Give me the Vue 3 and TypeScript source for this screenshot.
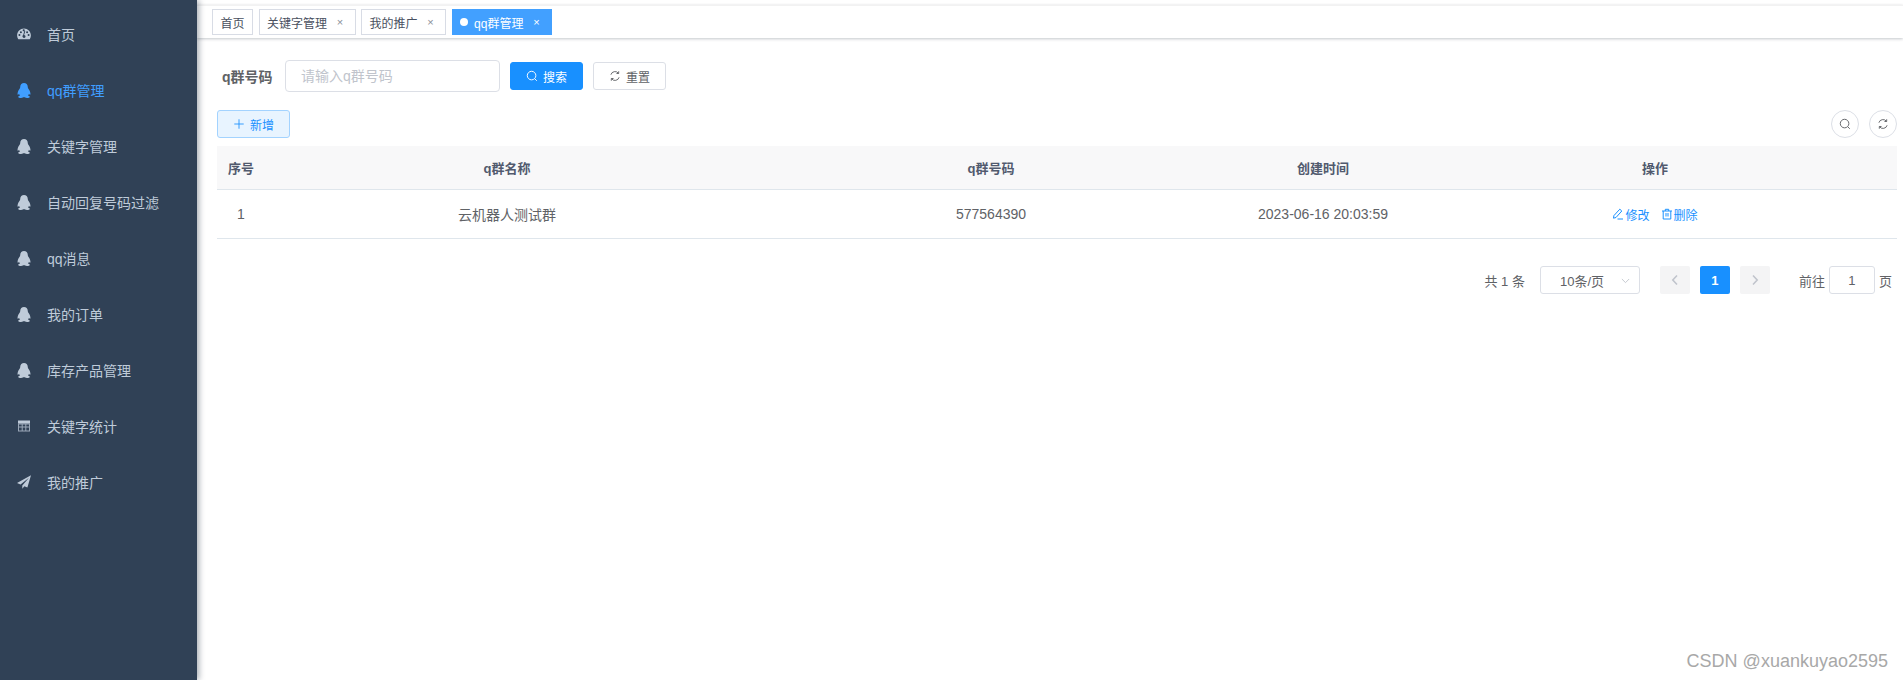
<template>
  <div class="app-wrapper">
    <aside class="sidebar">
      <a
        v-for="item in menu"
        :key="item.label"
        class="menu-item"
        :class="{ active: item.active }"
      >
        <svg v-if="item.icon === 'qq'" class="menu-icon qq" viewBox="0 0 14 15" fill="currentColor">
          <path d="M7 0C4.800 0 3.300 1.700 3.200 3.900c0 .8-.2 1.300-.6 1.900C1.700 7.100.8 8.500.6 10.200c-.1.900 0 1.500.3 1.500.4 0 .8-.4 1.100-.9.200.7.600 1.300 1.100 1.800-.9.200-1.800.6-1.800 1.300 0 .8 1.300 1.100 2.600 1.100 1.100 0 1.800-.3 2.300-.7h1.600c.5.400 1.200.7 2.300.7 1.300 0 2.600-.3 2.600-1.100 0-.7-.9-1.100-1.800-1.300.5-.5.900-1.100 1.100-1.800.3.500.7.900 1.100.9.300 0 .4-.6.300-1.500-.2-1.700-1.100-3.100-2-4.400-.4-.6-.6-1.100-.6-1.900C10.700 1.700 9.200 0 7 0z" />
        </svg>
        <svg v-else class="menu-icon" viewBox="0 0 14 14" fill="currentColor">
          <path
            v-if="item.icon === 'dashboard'"
            fill-rule="evenodd"
            d="M7 1.600C3.200 1.600.1 4.600.1 8.400c0 1.300.4 2.500 1 3.500.2.200.4.300.6.300h10.600c.2 0 .5-.1.6-.3.6-1 1-2.200 1-3.500 0-3.800-3.100-6.800-6.900-6.800zM2.400 9.100a1 1 0 1 1 0-2 1 1 0 0 1 0 2zm1.500-2.900a1 1 0 1 1 0-2 1 1 0 0 1 0 2zM7 10.900a1.500 1.500 0 0 1-.8-2.800l1.100-3.900c.1-.3.400-.4.600-.3.300.1.400.3.300.6L7.100 7.900A1.500 1.500 0 0 1 7 10.900zm0-6.700a1 1 0 1 1 0-1.900 1 1 0 0 1 0 1.900zm3.100 2a1 1 0 1 1 0-2 1 1 0 0 1 0 2zm1.500 2.900a1 1 0 1 1 0-2 1 1 0 0 1 0 2z"
          />
          <g v-else-if="item.icon === 'table'">
            <path d="M1 1.500h12v3H1z" />
            <path opacity="0.75" fill-rule="evenodd" d="M1 4.500h12v8H1zm1 1v2h2.700v-2zm3.700 0v2h2.600v-2zm3.600 0v2H12v-2zM2 8.500v3h2.700v-3zm3.700 0v3h2.600v-3zm3.600 0v3H12v-3z" />
          </g>
          <path v-else d="M14 .2 0 8.100l3.500 1.400L12 2.700 5.300 10.400v3.400l2.100-2.600 3 1.200z" />
        </svg>
        <span>{{ item.label }}</span>
      </a>
    </aside>

    <div class="main">
      <div class="tags-bar">
        <span
          v-for="tag in tags"
          :key="tag.label"
          class="tag"
          :class="{ current: tag.current }"
        >
          <i v-if="tag.current" class="tag-dot"></i>
          <span>{{ tag.label }}</span>
          <span v-if="tag.closable" class="tag-close">×</span>
        </span>
      </div>

      <div class="page">
        <form class="search-form" @submit.prevent>
          <label class="form-label">q群号码</label>
          <input class="text-input" type="text" placeholder="请输入q群号码" />
          <button type="button" class="btn btn-primary">
            <svg class="btn-icon" viewBox="0 0 14 14" fill="none" stroke="currentColor" stroke-width="1.100">
              <circle cx="6.500" cy="6.500" r="5" />
              <path d="m10.200 10.200 2.400 2.400" />
            </svg>
            搜索
          </button>
          <button type="button" class="btn btn-default">
            <svg class="btn-icon" viewBox="0 0 14 14" fill="none" stroke="currentColor" stroke-width="1.100">
              <path d="M2.200 5.500A5 5 0 0 1 11 3.800M11.800 8.500A5 5 0 0 1 3 10.200" />
              <path d="M11.300 1.500v2.600H8.700M2.700 12.500V9.900h2.600" />
            </svg>
            重置
          </button>
        </form>

        <div class="toolbar">
          <button type="button" class="btn btn-plain">
            <svg class="btn-icon" viewBox="0 0 14 14" fill="none" stroke="currentColor" stroke-width="1">
              <path d="M7 1.500v11M1.500 7h11" />
            </svg>
            新增
          </button>
          <div class="toolbar-right">
            <button type="button" class="circle-btn">
              <svg class="btn-icon" viewBox="0 0 14 14" fill="none" stroke="currentColor" stroke-width="1.100">
                <circle cx="6.500" cy="6.500" r="5" />
                <path d="m10.200 10.200 2.400 2.400" />
              </svg>
            </button>
            <button type="button" class="circle-btn">
              <svg class="btn-icon" viewBox="0 0 14 14" fill="none" stroke="currentColor" stroke-width="1.100">
                <path d="M2.200 5.500A5 5 0 0 1 11 3.800M11.800 8.500A5 5 0 0 1 3 10.200" />
                <path d="M11.300 1.500v2.600H8.700M2.700 12.500V9.900h2.600" />
              </svg>
            </button>
          </div>
        </div>

        <div class="table">
          <div class="row head">
            <div v-for="col in columns" :key="col" class="cell">{{ col }}</div>
          </div>
          <div v-for="row in rows" :key="row.id" class="row body">
            <div class="cell">{{ row.id }}</div>
            <div class="cell">{{ row.name }}</div>
            <div class="cell">{{ row.code }}</div>
            <div class="cell">{{ row.created }}</div>
            <div class="cell actions">
              <a class="link">
                <svg class="link-icon" viewBox="0 0 12 12" fill="none" stroke="currentColor" stroke-width="1">
                  <path d="M7.800 1.200 9.800 3 4 9.500l-2.500.7.400-2.600zM5.500 11h5.500" />
                </svg>修改
              </a>
              <a class="link">
                <svg class="link-icon" viewBox="0 0 12 12" fill="none" stroke="currentColor" stroke-width="1">
                  <path d="M1 3h10M4.300 3V1.300h3.400V3M2.200 3v8h7.600V3M5 5v3.500M7 5v3.500" />
                </svg>删除
              </a>
            </div>
          </div>
        </div>

        <div class="pagination">
          <span class="total">共 1 条</span>
          <div class="page-size">
            10条/页
            <svg class="caret" viewBox="0 0 10 6" fill="none" stroke="currentColor" stroke-width="1">
              <path d="m1 .8 4 4 4-4" />
            </svg>
          </div>
          <div class="pager">
            <button type="button" class="page-btn">
              <svg viewBox="0 0 8 12" fill="none" stroke="currentColor" stroke-width="1.600">
                <path d="M6 1.500 1.800 6 6 10.500" />
              </svg>
            </button>
            <button type="button" class="page-btn on">1</button>
            <button type="button" class="page-btn">
              <svg viewBox="0 0 8 12" fill="none" stroke="currentColor" stroke-width="1.600">
                <path d="M2 1.500 6.200 6 2 10.500" />
              </svg>
            </button>
          </div>
          <div class="jumper">
            前往
            <input class="jump-input" type="text" value="1" />
            页
          </div>
        </div>
      </div>
    </div>

    <div class="watermark">CSDN @xuankuyao2595</div>
  </div>
</template>

<script setup lang="ts">
interface MenuItem {
  label: string
  icon: 'dashboard' | 'qq' | 'table' | 'plane'
  active?: boolean
}

const menu: MenuItem[] = [
  { label: '首页', icon: 'dashboard' },
  { label: 'qq群管理', icon: 'qq', active: true },
  { label: '关键字管理', icon: 'qq' },
  { label: '自动回复号码过滤', icon: 'qq' },
  { label: 'qq消息', icon: 'qq' },
  { label: '我的订单', icon: 'qq' },
  { label: '库存产品管理', icon: 'qq' },
  { label: '关键字统计', icon: 'table' },
  { label: '我的推广', icon: 'plane' },
]

const tags = [
  { label: '首页', closable: false, current: false },
  { label: '关键字管理', closable: true, current: false },
  { label: '我的推广', closable: true, current: false },
  { label: 'qq群管理', closable: true, current: true },
]

const columns = ['序号', 'q群名称', 'q群号码', '创建时间', '操作']

const rows = [
  { id: 1, name: '云机器人测试群', code: '577564390', created: '2023-06-16 20:03:59' },
]
</script>

<style>
html,
body {
  margin: 0;
  height: 100%;
  overflow: hidden;
  background: #fff;
}
</style>

<style scoped>
.app-wrapper {
  display: flex;
  height: 680px;
  position: relative;
  font-family: "Liberation Sans", "Noto Sans CJK SC", sans-serif;
  color: #606266;
}

.sidebar {
  width: 197px;
  flex: none;
  background: #304156;
  box-shadow: 2px 0 6px rgba(0, 21, 41, 0.35);
  padding-top: 6px;
  box-sizing: border-box;
  z-index: 2;
}

.menu-item {
  display: flex;
  align-items: center;
  height: 56px;
  padding-left: 17px;
  font-size: 14px;
  color: #bfcbd9;
}

.menu-item.active {
  color: #409eff;
}

.menu-icon {
  width: 14px;
  height: 14px;
  margin-right: 16px;
  flex: none;
}

.menu-icon.qq {
  height: 15px;
}

.main {
  flex: 1;
  min-width: 0;
}

.tags-bar {
  height: 33px;
  margin-top: 5px;
  padding: 3px 0 0 15px;
  box-sizing: border-box;
  display: flex;
  gap: 5.5px;
  background: #fff;
  border-top: 1px solid #f2f2f2;
  box-shadow: 0 1px 3px rgba(0, 21, 41, 0.22), 0 0 3px rgba(0, 0, 0, 0.04);
}

.tag {
  height: 26px;
  box-sizing: border-box;
  display: inline-flex;
  align-items: center;
  padding: 0 7.5px;
  border: 1px solid #d8dce5;
  font-size: 12px;
  color: #495060;
  background: #fff;
}

.tag.current {
  background: #42a0ff;
  border-color: #42a0ff;
  color: #fff;
}

.tag-dot {
  width: 8px;
  height: 8px;
  border-radius: 50%;
  background: #fff;
  margin-right: 6px;
}

.tag-close {
  width: 14px;
  margin-left: 6px;
  font-size: 11px;
  text-align: center;
  color: #8a8f99;
}

.tag.current .tag-close {
  color: #fff;
}

.page {
  padding: 22px 6px 0 20px;
}

.search-form {
  display: flex;
  align-items: center;
  height: 32px;
}

.form-label {
  width: 68px;
  padding-left: 5px;
  box-sizing: border-box;
  font-size: 14px;
  font-weight: 700;
  color: #606266;
}

.text-input {
  width: 215px;
  height: 32px;
  box-sizing: border-box;
  border: 1px solid #dcdfe6;
  border-radius: 4px;
  padding: 0 15px;
  font: inherit;
  font-size: 14px;
  outline: none;
}

.text-input::placeholder {
  color: #c0c4cc;
}

.btn {
  width: 73px;
  height: 28px;
  box-sizing: border-box;
  display: inline-flex;
  align-items: center;
  justify-content: center;
  gap: 5px;
  border: 1px solid #dcdfe6;
  border-radius: 3px;
  font: inherit;
  font-size: 12px;
  background: #fff;
  color: #606266;
}

.btn-primary {
  margin-left: 10px;
  background: #1890ff;
  border-color: #1890ff;
  color: #fff;
}

.btn-default {
  margin-left: 10px;
}

.btn-plain {
  background: #e8f4ff;
  border-color: #a3d3ff;
  color: #1890ff;
}

.btn-icon {
  width: 12px;
  height: 12px;
  flex: none;
}

.toolbar {
  display: flex;
  justify-content: space-between;
  margin-top: 18px;
  margin-bottom: 8px;
}

.toolbar-right {
  display: flex;
  gap: 10px;
}

.circle-btn {
  width: 28px;
  height: 28px;
  box-sizing: border-box;
  display: inline-flex;
  align-items: center;
  justify-content: center;
  padding: 0;
  border: 1px solid #dcdfe6;
  border-radius: 50%;
  background: #fff;
  color: #606266;
}

.row {
  display: grid;
  grid-template-columns: 48px 484px 484px 180px 484px;
  align-items: center;
  box-sizing: border-box;
}

.row.head {
  height: 44px;
  background: #f8f8f9;
  border-bottom: 1px solid #dfe6ec;
  font-size: 13px;
  font-weight: 700;
  color: #515a6e;
}

.row.body {
  height: 49px;
  border-bottom: 1px solid #dfe6ec;
  font-size: 14px;
  color: #606266;
}

.cell {
  text-align: center;
}

.actions {
  display: flex;
  justify-content: center;
  gap: 11px;
}

.link {
  display: inline-flex;
  align-items: center;
  font-size: 12px;
  color: #1890ff;
}

.link-icon {
  width: 12px;
  height: 12px;
  margin-right: 1px;
}

.pagination {
  display: flex;
  align-items: center;
  height: 28px;
  margin-top: 27px;
  font-size: 13px;
  color: #606266;
}

.total {
  margin-left: auto;
}

.page-size {
  width: 100px;
  height: 28px;
  box-sizing: border-box;
  margin-left: 15px;
  padding-left: 19px;
  display: flex;
  align-items: center;
  position: relative;
  border: 1px solid #dcdfe6;
  border-radius: 3px;
}

.caret {
  position: absolute;
  right: 9px;
  top: 11px;
  width: 9px;
  height: 6px;
  color: #c0c4cc;
}

.pager {
  display: flex;
  gap: 10px;
  margin-left: 20px;
}

.page-btn {
  width: 30px;
  height: 28px;
  padding: 0;
  border: none;
  border-radius: 2px;
  display: inline-flex;
  align-items: center;
  justify-content: center;
  background: #f4f4f5;
  color: #c0c4cc;
  font: inherit;
  font-size: 13px;
  font-weight: 700;
}

.page-btn svg {
  width: 8px;
  height: 12px;
}

.page-btn.on {
  background: #1890ff;
  color: #fff;
}

.jumper {
  display: flex;
  align-items: center;
  gap: 4px;
  margin-left: 29px;
  margin-right: 5px;
}

.jump-input {
  width: 46px;
  height: 28px;
  box-sizing: border-box;
  border: 1px solid #dcdfe6;
  border-radius: 3px;
  text-align: center;
  font: inherit;
  color: #606266;
  outline: none;
}

.watermark {
  position: absolute;
  right: 15px;
  bottom: 9px;
  font-size: 18px;
  line-height: 20px;
  color: #a8a8a8;
}
</style>
